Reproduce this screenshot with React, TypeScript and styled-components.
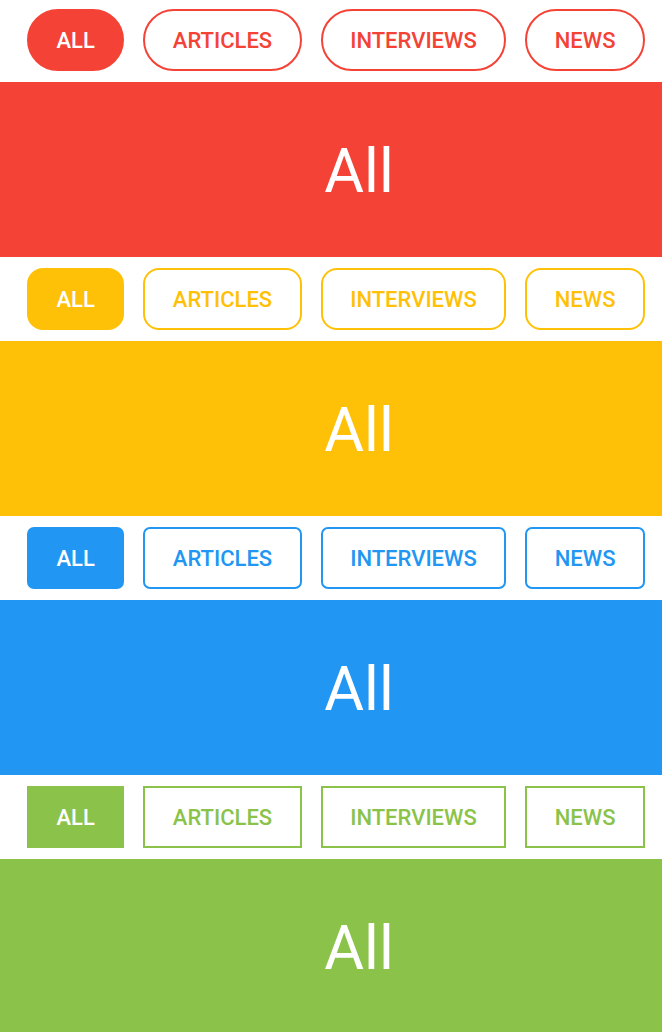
import React, { useState } from "react";
import styled, { createGlobalStyle } from "styled-components";

const Global = createGlobalStyle`
  html, body { margin: 0; padding: 0; background: #ffffff; }
  body { font-family: Roboto, "Noto Sans", Arial, sans-serif; overflow: hidden; }
  * { box-sizing: border-box; }
`;

const Page = styled.div`
  display: flex;
  flex-direction: column;
  width: 662px;
`;

const Section = styled.section`
  display: flex;
  flex-direction: column;
`;

const TabBar = styled.div<{ $first?: boolean }>`
  display: flex;
  align-items: center;
  gap: 19px;
  padding: ${(p) => (p.$first ? "9px 0 11px 27px" : "11px 0 11px 27px")};
  background: #ffffff;
`;

const Tab = styled.button<{ $active: boolean; $color: string; $radius: number }>`
  height: 62px;
  padding: 1px 27.5px 0;
  border: 2px solid ${(p) => p.$color};
  border-radius: ${(p) => p.$radius}px;
  background: ${(p) => (p.$active ? p.$color : "#ffffff")};
  color: ${(p) => (p.$active ? "#ffffff" : p.$color)};
  font-family: Roboto, Arial, sans-serif;
  font-weight: 500;
  font-size: 22px;
  letter-spacing: 0;
  line-height: 1;
  cursor: pointer;
  flex: none;
  white-space: nowrap;
`;

const Panel = styled.div<{ $color: string }>`
  height: 175px;
  background: ${(p) => p.$color};
  display: flex;
  align-items: center;
  justify-content: center;
  padding-left: 56px;
  padding-top: 2px;
  color: #ffffff;
  font-family: Roboto, Arial, sans-serif;
  font-weight: 400;
  font-size: 61px;
`;

const TABS = ["All", "Articles", "Interviews", "News"];

const THEMES = [
  { color: "#F44336", radius: 31 },
  { color: "#FFC107", radius: 16 },
  { color: "#2196F3", radius: 7 },
  { color: "#8BC34A", radius: 0 },
];

function TabSection({ color, radius, first }: { color: string; radius: number; first?: boolean }) {
  const [active, setActive] = useState(0);
  return (
    <Section>
      <TabBar $first={first}>
        {TABS.map((t, i) => (
          <Tab
            key={t}
            $active={i === active}
            $color={color}
            $radius={radius}
            onClick={() => setActive(i)}
          >
            {t.toUpperCase()}
          </Tab>
        ))}
      </TabBar>
      <Panel $color={color}>{TABS[active]}</Panel>
    </Section>
  );
}

export default function App() {
  return (
    <>
      <Global />
      <Page>
        {THEMES.map((t, i) => (
          <TabSection key={t.color} color={t.color} radius={t.radius} first={i === 0} />
        ))}
      </Page>
    </>
  );
}
